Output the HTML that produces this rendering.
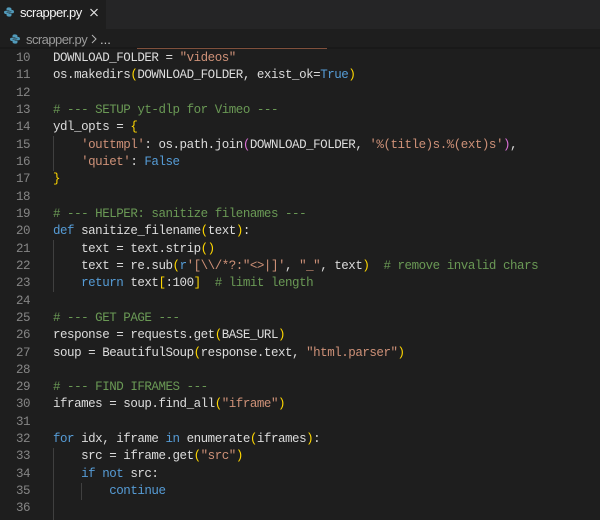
<!DOCTYPE html>
<html><head><meta charset="utf-8"><style>
html,body{margin:0;padding:0;background:#1e1e1e;width:600px;height:520px;overflow:hidden}
#r{position:relative;width:600px;height:520px;overflow:hidden;background:#1e1e1e}
.a{position:absolute}
.n,.l{position:absolute;font-family:"Liberation Mono",monospace;font-size:12.5px;letter-spacing:-0.47px;line-height:17px;white-space:pre;color:#dcdcdc}
.n{width:30px;left:0;text-align:right;color:#858585}
.l{left:53px}
.c{color:#6a9955}.s{color:#ce9178}.k{color:#569cd6}.y{color:#ffd700}.p{color:#da70d6}
.g{position:absolute;width:1px;background:#404040}
</style></head><body><div id="r">
<div class="a" style="left:0;top:0;width:600px;height:29px;background:#252526"></div>
<div class="a" style="left:0;top:0;width:106px;height:29px;background:#1e1e1e"></div>
<svg class="a" style="left:4px;top:7px" width="10" height="10" viewBox="0 0 12 14" preserveAspectRatio="none"><path d="M6 .5C3.200 .5 3 1.800 3 3V4.500H6.500V5.200H2C.6 5.200 0 6 0 7.200S.5 9.800 2 9.800H3.200V8C3.200 7 3.800 6.500 4.800 6.500H7.200C8.200 6.500 9 6 9 5V3C9 1.500 7.800 .5 6 .5Z" fill="#519aba"/><path d="M6 13.500C8.800 13.500 9 12.200 9 11V9.500H5.500V8.800H10C11.400 8.800 12 8 12 6.800S11.500 4.200 10 4.200H8.800V6C8.800 7 8.200 7.500 7.200 7.500H4.800C3.800 7.500 3 8 3 9V11C3 12.500 4.200 13.500 6 13.500Z" fill="#519aba"/></svg>
<div class="a" style="left:20px;top:4px;font:13px/17px 'Liberation Sans',sans-serif;letter-spacing:-.5px;color:#f4f4f4">scrapper.py</div>
<svg class="a" style="left:89px;top:8px" width="10" height="9" viewBox="0 0 10 9"><path d="M1.500 1L8.500 8M8.500 1L1.500 8" stroke="#e4e4e4" stroke-width="1.200" fill="none"/></svg>
<svg class="a" style="left:10px;top:34px" width="10" height="10" viewBox="0 0 12 14" preserveAspectRatio="none"><path d="M6 .5C3.200 .5 3 1.800 3 3V4.500H6.500V5.200H2C.6 5.200 0 6 0 7.200S.5 9.800 2 9.800H3.200V8C3.200 7 3.800 6.500 4.800 6.500H7.200C8.200 6.500 9 6 9 5V3C9 1.500 7.800 .5 6 .5Z" fill="#519aba"/><path d="M6 13.500C8.800 13.500 9 12.200 9 11V9.500H5.500V8.800H10C11.400 8.800 12 8 12 6.800S11.500 4.200 10 4.200H8.800V6C8.800 7 8.200 7.500 7.200 7.500H4.800C3.800 7.500 3 8 3 9V11C3 12.500 4.200 13.500 6 13.500Z" fill="#519aba"/></svg>
<div class="a" style="left:26px;top:31px;font:13px/17px 'Liberation Sans',sans-serif;letter-spacing:-.55px;color:#9a9a9a">scrapper.py</div>
<svg class="a" style="left:91px;top:34px" width="6" height="10" viewBox="0 0 6 10"><path d="M1 1L5 5L1 9" stroke="#b4b4b4" stroke-width="1" fill="none"/></svg>
<div class="a" style="left:100px;top:31px;font:13px/17px 'Liberation Sans',sans-serif;color:#c8c8c8">...</div>
<div class="a" style="left:0;top:47px;width:600px;height:2px;background:#191919"></div>
<div class="a" style="left:137px;top:48px;width:190px;height:1px;background:#80503c"></div>

<div class="g" style="left:53px;top:136px;height:35px"></div>
<div class="g" style="left:53px;top:240px;height:52px"></div>
<div class="g" style="left:53px;top:448px;height:72px"></div>
<div class="g" style="left:81px;top:483px;height:17px"></div>

<div class="n" style="top:50px">10</div><div class="l" style="top:50px">DOWNLOAD_FOLDER = <span class="s">"videos"</span></div>
<div class="n" style="top:67px">11</div><div class="l" style="top:67px">os.makedirs<span class="y">(</span>DOWNLOAD_FOLDER, exist_ok=<span class="k">True</span><span class="y">)</span></div>
<div class="n" style="top:85px">12</div>
<div class="n" style="top:102px">13</div><div class="l c" style="top:102px"># --- SETUP yt-dlp for Vimeo ---</div>
<div class="n" style="top:119px">14</div><div class="l" style="top:119px">ydl_opts = <span class="y">{</span></div>
<div class="n" style="top:137px">15</div><div class="l" style="top:137px">    <span class="s">'outtmpl'</span>: os.path.join<span class="p">(</span>DOWNLOAD_FOLDER, <span class="s">'%(title)s.%(ext)s'</span><span class="p">)</span>,</div>
<div class="n" style="top:154px">16</div><div class="l" style="top:154px">    <span class="s">'quiet'</span>: <span class="k">False</span></div>
<div class="n" style="top:171px">17</div><div class="l" style="top:171px"><span class="y">}</span></div>
<div class="n" style="top:189px">18</div>
<div class="n" style="top:206px">19</div><div class="l c" style="top:206px"># --- HELPER: sanitize filenames ---</div>
<div class="n" style="top:223px">20</div><div class="l" style="top:223px"><span class="k">def</span> sanitize_filename<span class="y">(</span>text<span class="y">)</span>:</div>
<div class="n" style="top:241px">21</div><div class="l" style="top:241px">    text = text.strip<span class="y">()</span></div>
<div class="n" style="top:258px">22</div><div class="l" style="top:258px">    text = re.sub<span class="y">(</span><span class="k">r</span><span class="s">'[\\/*?:"&lt;&gt;|]'</span>, <span class="s">"_"</span>, text<span class="y">)</span>  <span class="c"># remove invalid chars</span></div>
<div class="n" style="top:275px">23</div><div class="l" style="top:275px">    <span class="k">return</span> text<span class="y">[</span>:100<span class="y">]</span>  <span class="c"># limit length</span></div>
<div class="n" style="top:293px">24</div>
<div class="n" style="top:310px">25</div><div class="l c" style="top:310px"># --- GET PAGE ---</div>
<div class="n" style="top:327px">26</div><div class="l" style="top:327px">response = requests.get<span class="y">(</span>BASE_URL<span class="y">)</span></div>
<div class="n" style="top:345px">27</div><div class="l" style="top:345px">soup = BeautifulSoup<span class="y">(</span>response.text, <span class="s">"html.parser"</span><span class="y">)</span></div>
<div class="n" style="top:362px">28</div>
<div class="n" style="top:379px">29</div><div class="l c" style="top:379px"># --- FIND IFRAMES ---</div>
<div class="n" style="top:396px">30</div><div class="l" style="top:396px">iframes = soup.find_all<span class="y">(</span><span class="s">"iframe"</span><span class="y">)</span></div>
<div class="n" style="top:414px">31</div>
<div class="n" style="top:431px">32</div><div class="l" style="top:431px"><span class="k">for</span> idx, iframe <span class="k">in</span> enumerate<span class="y">(</span>iframes<span class="y">)</span>:</div>
<div class="n" style="top:448px">33</div><div class="l" style="top:448px">    src = iframe.get<span class="y">(</span><span class="s">"src"</span><span class="y">)</span></div>
<div class="n" style="top:466px">34</div><div class="l" style="top:466px">    <span class="k">if</span> <span class="k">not</span> src:</div>
<div class="n" style="top:483px">35</div><div class="l" style="top:483px">        <span class="k">continue</span></div>
<div class="n" style="top:500px">36</div>
</div></body></html>
